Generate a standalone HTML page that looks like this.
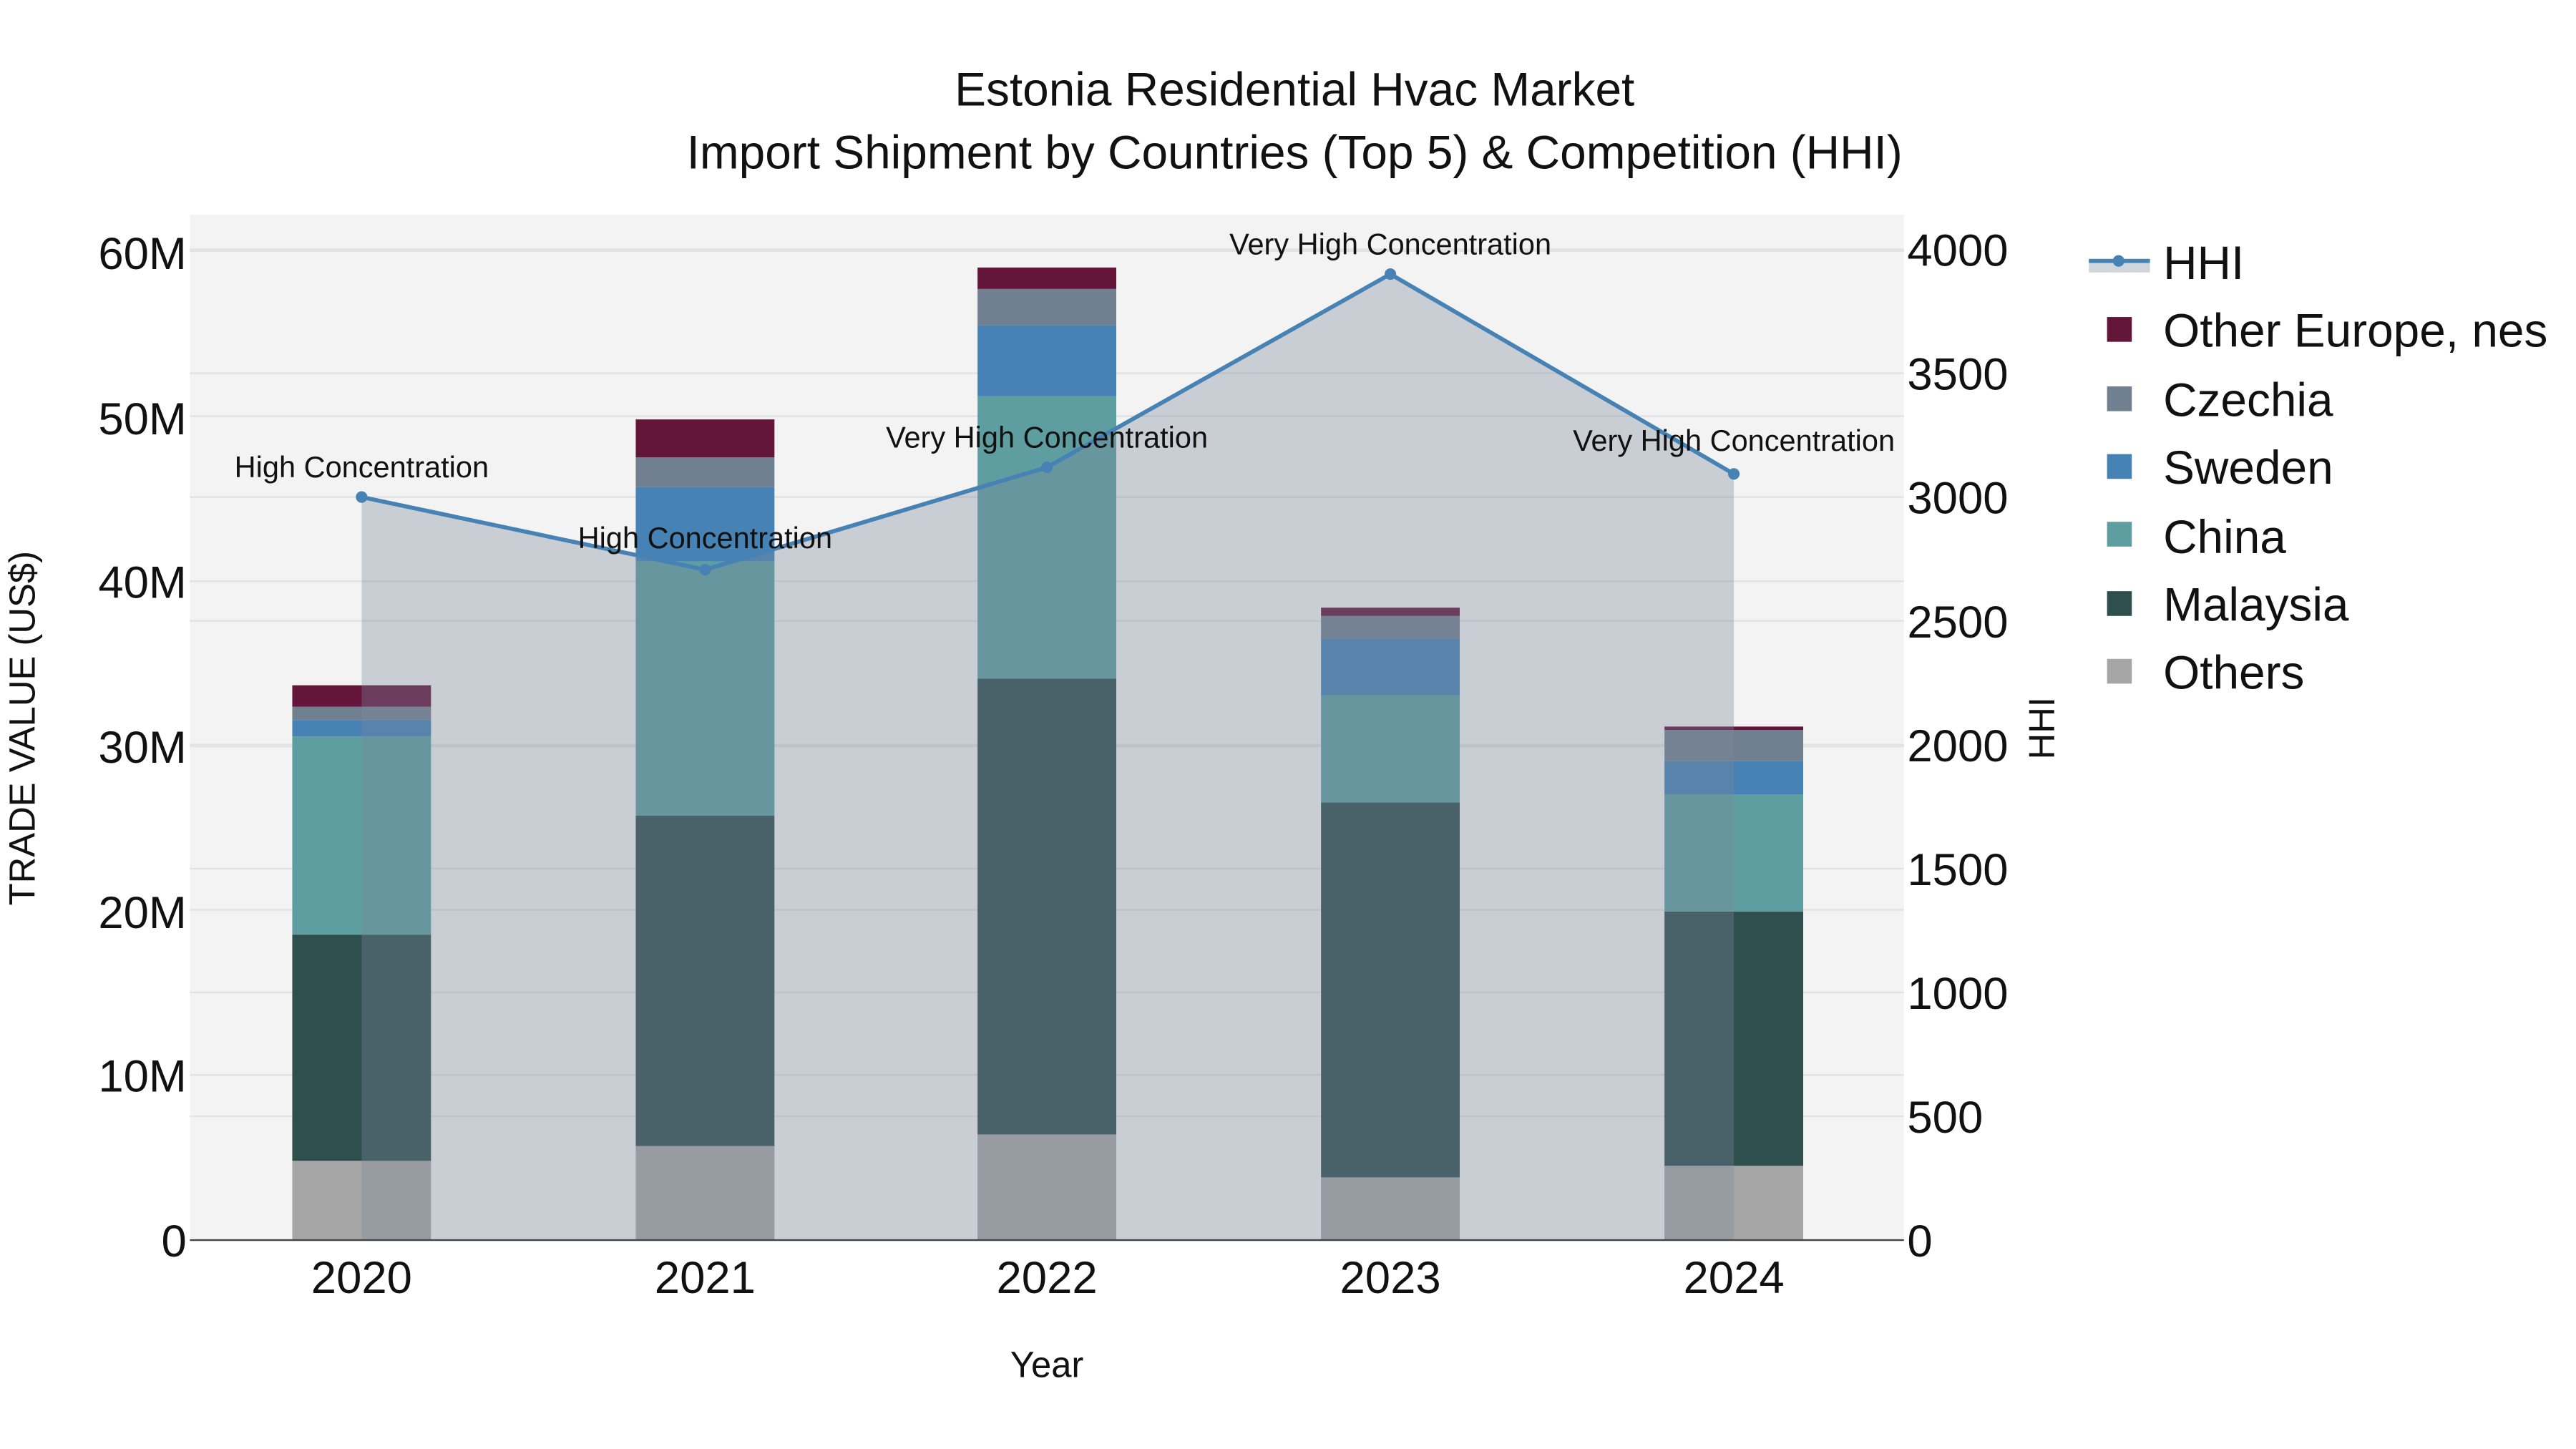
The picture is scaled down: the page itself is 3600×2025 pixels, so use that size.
<!DOCTYPE html><html><head><style>html,body{margin:0;padding:0;background:#fff}svg{display:block}</style></head><body>
<svg width="3600" height="2025" viewBox="0 0 1560 877.5" xmlns="http://www.w3.org/2000/svg" font-family="Liberation Sans, sans-serif">
<rect x="115" y="130" width="1038" height="621" fill="#f3f3f3"/>
<g stroke="#e2e2e2" stroke-width="1">
<line x1="115" x2="1153" y1="651" y2="651"/><line x1="115" x2="1153" y1="551" y2="551"/><line x1="115" x2="1153" y1="452" y2="452"/><line x1="115" x2="1153" y1="352" y2="352"/><line x1="115" x2="1153" y1="252" y2="252"/><line x1="115" x2="1153" y1="152" y2="152"/>
<line x1="115" x2="1153" y1="676" y2="676"/><line x1="115" x2="1153" y1="601" y2="601"/><line x1="115" x2="1153" y1="526" y2="526"/><line x1="115" x2="1153" y1="451" y2="451"/><line x1="115" x2="1153" y1="376" y2="376"/><line x1="115" x2="1153" y1="301" y2="301"/><line x1="115" x2="1153" y1="226" y2="226"/><line x1="115" x2="1153" y1="151" y2="151"/>
</g>
<g>
<rect x="177" y="703" width="84" height="48" fill="#a6a6a6"/><rect x="177" y="566" width="84" height="137" fill="#2f4f4f"/><rect x="177" y="446" width="84" height="120" fill="#5f9ea0"/><rect x="177" y="436" width="84" height="10" fill="#4682b4"/><rect x="177" y="428" width="84" height="8" fill="#708090"/><rect x="177" y="415" width="84" height="13" fill="#63153a"/>
<rect x="385" y="694" width="84" height="57" fill="#a6a6a6"/><rect x="385" y="494" width="84" height="200" fill="#2f4f4f"/><rect x="385" y="340" width="84" height="154" fill="#5f9ea0"/><rect x="385" y="295" width="84" height="45" fill="#4682b4"/><rect x="385" y="277" width="84" height="18" fill="#708090"/><rect x="385" y="254" width="84" height="23" fill="#63153a"/>
<rect x="592" y="687" width="84" height="64" fill="#a6a6a6"/><rect x="592" y="411" width="84" height="276" fill="#2f4f4f"/><rect x="592" y="240" width="84" height="171" fill="#5f9ea0"/><rect x="592" y="197" width="84" height="43" fill="#4682b4"/><rect x="592" y="175" width="84" height="22" fill="#708090"/><rect x="592" y="162" width="84" height="13" fill="#63153a"/>
<rect x="800" y="713" width="84" height="38" fill="#a6a6a6"/><rect x="800" y="486" width="84" height="227" fill="#2f4f4f"/><rect x="800" y="421" width="84" height="65" fill="#5f9ea0"/><rect x="800" y="387" width="84" height="34" fill="#4682b4"/><rect x="800" y="373" width="84" height="14" fill="#708090"/><rect x="800" y="368" width="84" height="5" fill="#63153a"/>
<rect x="1008" y="706" width="84" height="45" fill="#a6a6a6"/><rect x="1008" y="552" width="84" height="154" fill="#2f4f4f"/><rect x="1008" y="481" width="84" height="71" fill="#5f9ea0"/><rect x="1008" y="461" width="84" height="20" fill="#4682b4"/><rect x="1008" y="442" width="84" height="19" fill="#708090"/><rect x="1008" y="440" width="84" height="2" fill="#63153a"/>
</g>
<polygon points="219,751 219,301 427,345 634,283 842,166 1050,287 1050,751" fill="rgba(123,134,154,0.35)"/>
<polyline points="219,301 427,345 634,283 842,166 1050,287" fill="none" stroke="#4682b4" stroke-width="2.5"/>
<g fill="#4682b4"><circle cx="219" cy="301" r="3.5"/><circle cx="427" cy="345" r="3.5"/><circle cx="634" cy="283" r="3.5"/><circle cx="842" cy="166" r="3.5"/><circle cx="1050" cy="287" r="3.5"/></g>
<line x1="115" x2="1153" y1="751" y2="751" stroke="#444" stroke-width="1"/>
<g font-size="18" fill="#111" text-anchor="middle">
<text x="219" y="289">High Concentration</text><text x="427" y="332">High Concentration</text><text x="634" y="271">Very High Concentration</text><text x="842" y="154">Very High Concentration</text><text x="1050" y="273">Very High Concentration</text>
</g>
<g font-size="28.5" fill="#111" text-anchor="middle">
<text x="784" y="64">Estonia Residential Hvac Market</text>
<text x="784" y="102">Import Shipment by Countries (Top 5) &amp; Competition (HHI)</text>
</g>
<g font-size="27.5" fill="#111" text-anchor="end">
<text x="113" y="761">0</text><text x="113" y="661">10M</text><text x="113" y="562">20M</text><text x="113" y="462">30M</text><text x="113" y="362">40M</text><text x="113" y="263">50M</text><text x="113" y="163">60M</text>
</g>
<g font-size="27.5" fill="#111">
<text x="1155" y="761">0</text><text x="1155" y="686">500</text><text x="1155" y="611">1000</text><text x="1155" y="536">1500</text><text x="1155" y="461">2000</text><text x="1155" y="386">2500</text><text x="1155" y="311">3000</text><text x="1155" y="236">3500</text><text x="1155" y="161">4000</text>
</g>
<g font-size="27.5" fill="#111" text-anchor="middle">
<text x="219" y="783">2020</text><text x="427" y="783">2021</text><text x="634" y="783">2022</text><text x="842" y="783">2023</text><text x="1050" y="783">2024</text>
</g>
<text x="634" y="834" font-size="22" fill="#111" text-anchor="middle">Year</text>
<text transform="translate(21,441) rotate(-90)" font-size="22" fill="#111" text-anchor="middle">TRADE VALUE (US$)</text>
<text transform="translate(1244,441) rotate(-90)" font-size="22" fill="#111" text-anchor="middle">HHI</text>
<g>
<rect x="1265" y="158" width="37" height="7" fill="rgba(123,134,154,0.35)"/>
<line x1="1265" x2="1302" y1="158" y2="158" stroke="#4682b4" stroke-width="2.5"/><circle cx="1283" cy="158" r="3.5" fill="#4682b4"/>
<rect x="1276" y="192" width="15" height="15" fill="#63153a"/>
<rect x="1276" y="234" width="15" height="15" fill="#708090"/>
<rect x="1276" y="275" width="15" height="15" fill="#4682b4"/>
<rect x="1276" y="316" width="15" height="15" fill="#5f9ea0"/>
<rect x="1276" y="358" width="15" height="15" fill="#2f4f4f"/>
<rect x="1276" y="399" width="15" height="15" fill="#a6a6a6"/>
</g>
<g font-size="28.5" fill="#111">
<text x="1310" y="169">HHI</text><text x="1310" y="210">Other Europe, nes</text><text x="1310" y="252">Czechia</text><text x="1310" y="293">Sweden</text><text x="1310" y="335">China</text><text x="1310" y="376">Malaysia</text><text x="1310" y="417">Others</text>
</g>
</svg>
</body></html>
